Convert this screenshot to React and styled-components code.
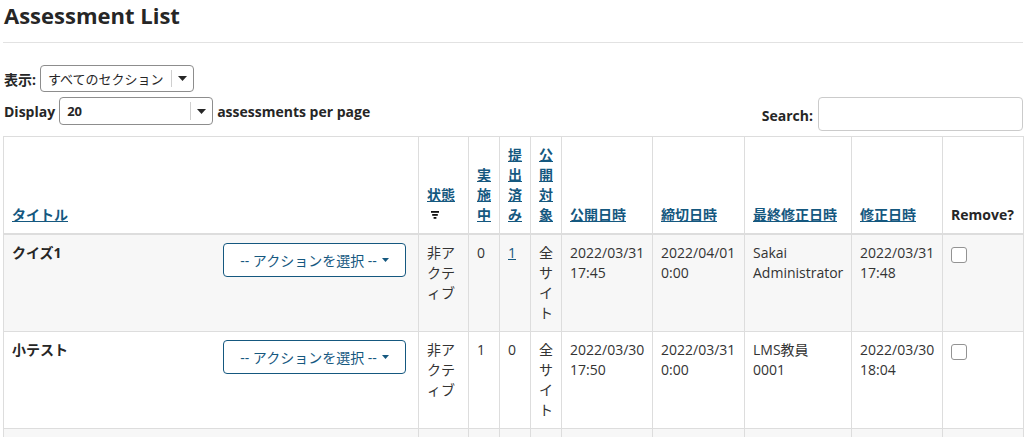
import React from "react";
import styled, { createGlobalStyle } from "styled-components";

const Global = createGlobalStyle`
  html, body { margin: 0; padding: 0; background: #fff; }
  body {
    font-family: "Open Sans", "Noto Sans CJK JP", sans-serif;
    color: #262626;
    font-size: 14px;
  }
`;

const LINK = "#15587f";
const FONT = `"Open Sans", "Noto Sans CJK JP", sans-serif`;

const Page = styled.div`
  width: 1020px;
  padding-left: 3px;
`;

const Title = styled.h1`
  margin: 0;
  font-size: 22px;
  line-height: 30px;
  font-weight: 700;
  color: #262626;
  padding-left: 1px;
`;

const Rule = styled.hr`
  margin: 12px 0 0;
  border: 0;
  border-top: 1px solid #e2e2e2;
`;

const FilterRow = styled.div`
  display: flex;
  align-items: center;
  gap: 4px;
  margin-top: 22px;
`;

const Label = styled.span`
  font-weight: 700;
  font-size: 14px;
  padding-left: ${(p) => p.$indent || 0}px;
  margin-top: ${(p) => p.$drop || 0}px;
`;

const SelectBox = styled.div`
  box-sizing: border-box;
  width: ${(p) => p.$w}px;
  height: ${(p) => p.$h}px;
  border: 1px solid #8d8d8d;
  border-radius: 4px;
  background: #fff;
  display: flex;
  align-items: center;
  padding-left: 7px;
`;

const SelectValue = styled.span`
  flex: 1;
  font-size: 13px;
  font-weight: ${(p) => (p.$bold ? 700 : 400)};
  color: #262626;
  white-space: nowrap;
`;

const SelectDivider = styled.span`
  width: 1px;
  align-self: stretch;
  margin: 4px 0;
  background: #cfcfcf;
`;

const CaretWrap = styled.span`
  width: 21px;
  display: flex;
  justify-content: center;
  align-items: center;
`;

const Caret = ({ w = 9, h = 5, color = "#262626" }) => (
  <svg width={w} height={h} viewBox={`0 0 ${w} ${h}`}>
    <polygon points={`0,0 ${w},0 ${w / 2},${h}`} fill={color} />
  </svg>
);

const DisplayRow = styled.div`
  display: flex;
  justify-content: space-between;
  align-items: flex-start;
  margin-top: 5px;
`;

const Group = styled.div`
  display: flex;
  align-items: center;
  gap: ${(p) => p.$gap}px;
  height: ${(p) => p.$h}px;
`;

const SearchInput = styled.input`
  box-sizing: border-box;
  width: 205px;
  height: 34px;
  border: 1px solid #cbcbcb;
  border-radius: 4px;
  margin: 0;
  padding: 0 8px;
  font-family: ${FONT};
`;

const Table = styled.table`
  margin-top: 5px;
  width: 1020px;
  border-collapse: collapse;
  table-layout: fixed;
  font-family: ${FONT};
  font-size: 14px;
  line-height: 20px;
`;

const Th = styled.th`
  border: 1px solid #dddddd;
  border-bottom: 2px solid #dddddd;
  padding: 8px;
  text-align: left;
  vertical-align: bottom;
  font-weight: 700;
  color: #262626;
`;

const Td = styled.td`
  border: 1px solid #dddddd;
  padding: 8px;
  vertical-align: top;
  color: #333;
`;

const Tr = styled.tr`
  background: ${(p) => (p.$striped ? "#f7f7f7" : "#fff")};
  height: ${(p) => (p.$h ? `${p.$h}px` : "auto")};
`;

const HeadLink = styled.a`
  color: ${LINK};
  text-decoration: underline;
  cursor: pointer;
`;

const SortIcon = styled.span`
  margin-left: 4px;
  height: 20px;
  display: flex;
  align-items: center;
`;

const TitleCell = styled.div`
  display: flex;
  justify-content: space-between;
  align-items: flex-start;
  padding-right: 4px;
`;

const ItemName = styled.span`
  font-weight: 700;
  color: #262626;
`;

const ActionButton = styled.button`
  box-sizing: border-box;
  width: 183px;
  height: 34px;
  border: 1px solid ${LINK};
  border-radius: 4px;
  background: #fff;
  color: ${LINK};
  font-family: ${FONT};
  font-size: 14px;
  display: flex;
  align-items: center;
  justify-content: center;
  gap: 5px;
  padding: 0;
  cursor: pointer;
`;

const Check = styled.span`
  display: block;
  box-sizing: border-box;
  width: 16px;
  height: 16px;
  margin-top: 4px;
  border: 1px solid #939393;
  border-radius: 3px;
  background: #fff;
`;

const cols = [415, 50, 31, 31, 31, 91, 92, 107, 91, 81];

const rows = [
  {
    name: "クイズ1",
    status: "非アクティブ",
    taken: "0",
    submitted: "1",
    submittedLink: true,
    target: "全サイト",
    open: ["2022/03/31", "17:45"],
    due: ["2022/04/01", "0:00"],
    by: ["Sakai", "Administrator"],
    mod: ["2022/03/31", "17:48"],
  },
  {
    name: "小テスト",
    status: "非アクティブ",
    taken: "1",
    submitted: "0",
    submittedLink: false,
    target: "全サイト",
    open: ["2022/03/30", "17:50"],
    due: ["2022/03/31", "0:00"],
    by: ["LMS教員", "0001"],
    mod: ["2022/03/30", "18:04"],
  },
];

const TwoLines = ({ v }) => (
  <>
    {v[0]}
    <br />
    {v[1]}
  </>
);

export default function App() {
  return (
    <>
      <Global />
      <Page>
        <Title>Assessment List</Title>
        <Rule />
        <FilterRow>
          <Label $indent={1}>表示:</Label>
          <SelectBox $w={154} $h={27}>
            <SelectValue>すべてのセクション</SelectValue>
            <SelectDivider />
            <CaretWrap>
              <Caret />
            </CaretWrap>
          </SelectBox>
        </FilterRow>
        <DisplayRow>
          <Group $h={28} $gap={4}>
            <Label $indent={1}>Display</Label>
            <SelectBox $w={154} $h={28}>
              <SelectValue $bold>20</SelectValue>
              <SelectDivider />
              <CaretWrap>
                <Caret />
              </CaretWrap>
            </SelectBox>
            <Label>assessments per page</Label>
          </Group>
          <Group $h={34} $gap={5}>
            <Label $drop={3}>Search:</Label>
            <SearchInput type="text" />
          </Group>
        </DisplayRow>
        <Table>
          <colgroup>
            {cols.map((w, i) => (
              <col key={i} style={{ width: w }} />
            ))}
          </colgroup>
          <thead>
            <tr>
              <Th>
                <HeadLink>タイトル</HeadLink>
              </Th>
              <Th>
                <HeadLink>状態</HeadLink>
                <SortIcon>
                  <svg width="8" height="8" viewBox="0 0 8 8">
                    <rect x="0" y="0" width="8" height="1.8" fill="#111" />
                    <rect x="1.2" y="3" width="5.6" height="1.8" fill="#111" />
                    <rect x="2.6" y="6" width="2.8" height="1.8" fill="#111" />
                  </svg>
                </SortIcon>
              </Th>
              <Th>
                <HeadLink>実施中</HeadLink>
              </Th>
              <Th>
                <HeadLink>提出済み</HeadLink>
              </Th>
              <Th>
                <HeadLink>公開対象</HeadLink>
              </Th>
              <Th>
                <HeadLink>公開日時</HeadLink>
              </Th>
              <Th>
                <HeadLink>締切日時</HeadLink>
              </Th>
              <Th>
                <HeadLink>最終修正日時</HeadLink>
              </Th>
              <Th>
                <HeadLink>修正日時</HeadLink>
              </Th>
              <Th>Remove?</Th>
            </tr>
          </thead>
          <tbody>
            {rows.map((r, i) => (
              <Tr key={i} $striped={i % 2 === 0}>
                <Td>
                  <TitleCell>
                    <ItemName>{r.name}</ItemName>
                    <ActionButton type="button">
                      -- アクションを選択 --
                      <Caret w={7} h={4} color={LINK} />
                    </ActionButton>
                  </TitleCell>
                </Td>
                <Td>{r.status}</Td>
                <Td>{r.taken}</Td>
                <Td>
                  {r.submittedLink ? <HeadLink>{r.submitted}</HeadLink> : r.submitted}
                </Td>
                <Td>{r.target}</Td>
                <Td>
                  <TwoLines v={r.open} />
                </Td>
                <Td>
                  <TwoLines v={r.due} />
                </Td>
                <Td>
                  <TwoLines v={r.by} />
                </Td>
                <Td>
                  <TwoLines v={r.mod} />
                </Td>
                <Td>
                  <Check />
                </Td>
              </Tr>
            ))}
            <Tr $striped $h={60}>
              {cols.map((_, i) => (
                <Td key={i} />
              ))}
            </Tr>
          </tbody>
        </Table>
      </Page>
    </>
  );
}
